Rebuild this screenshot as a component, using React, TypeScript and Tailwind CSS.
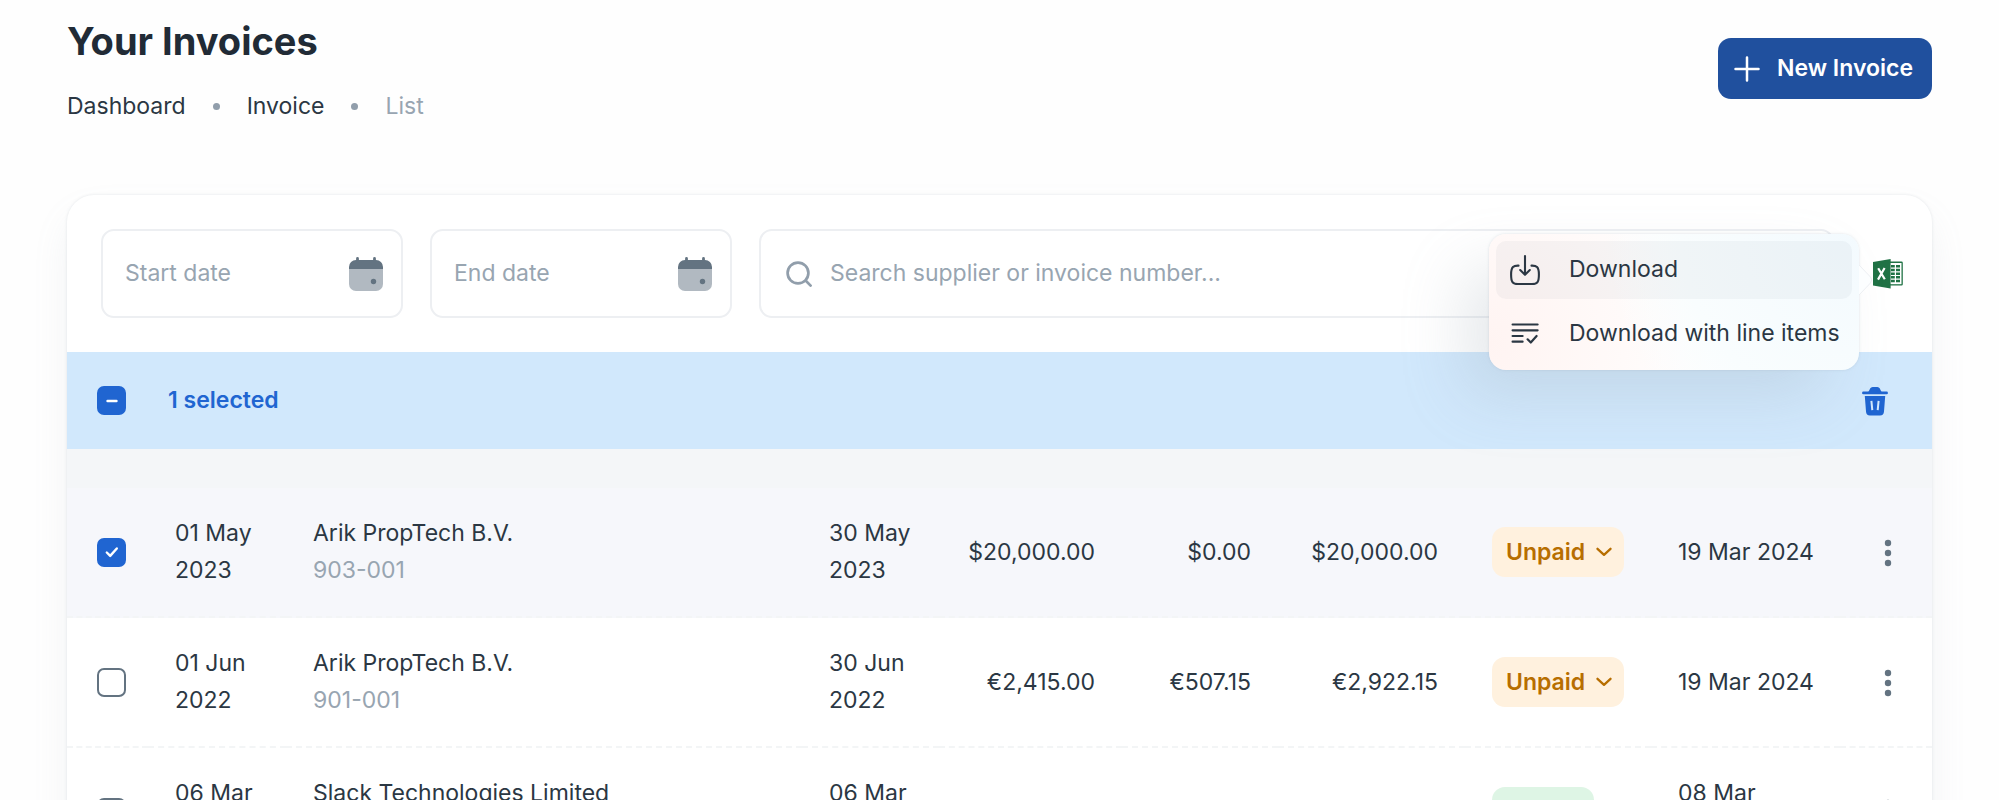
import React, { useState } from 'react';

interface Invoice {
  id: string;
  issued: [string, string];
  supplier: string;
  number: string;
  due: [string, string];
  amount: string;
  tax: string;
  total: string;
  status: 'Unpaid' | 'Paid';
  updated: string[];
}

const INVOICES: Invoice[] = [
  {
    id: '1',
    issued: ['01 May', '2023'],
    supplier: 'Arik PropTech B.V.',
    number: '903-001',
    due: ['30 May', '2023'],
    amount: '$20,000.00',
    tax: '$0.00',
    total: '$20,000.00',
    status: 'Unpaid',
    updated: ['19 Mar 2024'],
  },
  {
    id: '2',
    issued: ['01 Jun', '2022'],
    supplier: 'Arik PropTech B.V.',
    number: '901-001',
    due: ['30 Jun', '2022'],
    amount: '€2,415.00',
    tax: '€507.15',
    total: '€2,922.15',
    status: 'Unpaid',
    updated: ['19 Mar 2024'],
  },
  {
    id: '3',
    issued: ['06 Mar', '2024'],
    supplier: 'Slack Technologies Limited',
    number: '902-001',
    due: ['06 Mar', '2024'],
    amount: '€84.00',
    tax: '€0.00',
    total: '€84.00',
    status: 'Paid',
    updated: ['08 Mar', '2024'],
  },
];

const CalendarIcon = () => (
  <svg width="34" height="34" viewBox="0 0 34 34" aria-hidden="true">
    <path d="M0 12h34v15a7 7 0 0 1-7 7H7a7 7 0 0 1-7-7z" fill="#b1b9c1" />
    <path d="M8.5 0a1.4 1.4 0 0 1 1.4 1.4V3h14.2V1.4a1.4 1.4 0 0 1 2.8 0V3H27a7 7 0 0 1 7 7v2H0v-2a7 7 0 0 1 7-7h.1V1.4A1.4 1.4 0 0 1 8.5 0z" fill="#637381" />
    <circle cx="24.5" cy="24.5" r="2.7" fill="#637381" />
  </svg>
);

const SearchIcon = () => (
  <svg width="26" height="26" viewBox="0 0 26 26" fill="none" stroke="#919eab" strokeWidth="2.7" strokeLinecap="round" aria-hidden="true">
    <circle cx="12" cy="12" r="10.4" />
    <path d="m19.8 19.8 4.8 4.8" />
  </svg>
);

const DownloadIcon = () => (
  <svg width="32" height="32" viewBox="0 0 32 32" fill="none" stroke="#2b3743" strokeWidth="2.1" strokeLinecap="round" strokeLinejoin="round" aria-hidden="true">
    <path d="M9.5 11.6C4.6 11.4 2.1 12.8 2.1 20.5c0 7.5 1.4 9.5 6.9 9.5h14c5.5 0 6.9-2 6.9-9.5 0-7.7-2.5-9.1-7.4-8.9" />
    <path d="M16 2v18.500M11.200 16l4.800 4.800 4.800-4.800" />
  </svg>
);

const LineItemsIcon = () => (
  <svg width="32" height="32" viewBox="0 0 32 32" fill="none" stroke="#2b3743" strokeWidth="2.2" strokeLinecap="round" strokeLinejoin="round" aria-hidden="true">
    <path d="M3.600 6.500h25M3.600 12.300h25M3.600 18h10M3.600 23.700h10M18.600 21.300l3.200 3.200 5.800-6.500" />
  </svg>
);

const ExcelIcon = () => (
  <svg width="30" height="30" viewBox="0 0 30 30" aria-hidden="true">
    <path d="M17 2.500h11.500a1.300 1.300 0 0 1 1.300 1.300v21.400a1.300 1.300 0 0 1-1.300 1.300H17z" fill="#207245" />
    <path d="M17 4h11.500v21.200H17z" fill="#fff" />
    <path d="M18 6h3.800v2.500H18zM23 6h4v2.500h-4zM18 9.700h3.800v2.500H18zM23 9.700h4v2.500h-4zM18 13.400h3.800v2.500H18zM23 13.400h4v2.500h-4zM18 17.100h3.800v2.500H18zM23 17.100h4v2.500h-4zM18 20.800h3.800v2.500H18zM23 20.800h4v2.500h-4z" fill="#207245" />
    <path d="M0 3 17.600 0v29.500L0 26.500z" fill="#207245" />
    <path d="m5.200 9.300 6.600 11M11.600 9 5 20.600" stroke="#fff" strokeWidth="2.200" />
  </svg>
);

const TrashIcon = () => (
  <svg width="26" height="30" viewBox="0 0 26 30" aria-hidden="true">
    <path d="M1.400 5.600h4.800C7.600 5.200 7.600 1 10.800 1h4.400c3.200 0 3.200 4.200 4.600 4.600h4.800a1.350 1.350 0 0 1 0 2.700H1.400a1.350 1.350 0 0 1 0-2.700z" fill="#2065d1" />
    <path fillRule="evenodd" d="M2.800 10h20.400l-1.200 15.400c-.2 2.700-1.400 4-4 4H8c-2.600 0-3.800-1.300-4-4zm5.600 5 .9 9.300 2-.2-.9-9.300zm7.200-.2-.9 9.300 2 .2.900-9.300z" fill="#2065d1" />
  </svg>
);

const DateField: React.FC<{ id: string; label: string }> = ({ id, label }) => (
  <div className="flex h-[89px] w-[302px] shrink-0 items-center rounded-[13px] border-2 border-[#edeff2] pl-[22px] pr-[18px]">
    <input
      id={id}
      type="text"
      aria-label={label}
      placeholder={label}
      className="min-w-0 flex-1 bg-transparent text-[23px] text-[#212b36] outline-none placeholder:text-[#98a5b1]"
    />
    <button type="button" aria-label={`Choose ${label.toLowerCase()}`}>
      <CalendarIcon />
    </button>
  </div>
);

interface TickBoxProps {
  label: string;
  checked: boolean;
  partial?: boolean;
  onChange: () => void;
}

const TickBox: React.FC<TickBoxProps> = ({ label, checked, partial, onChange }) => (
  <label className="grid h-[29px] w-[29px] place-items-center">
    <input
      type="checkbox"
      aria-label={label}
      checked={checked}
      onChange={onChange}
      className="col-start-1 row-start-1 h-[29px] w-[29px] appearance-none rounded-[7px] border-2 border-[#637381] bg-white checked:border-[#2065d1] checked:bg-[#2065d1]"
    />
    {checked && (
      <svg width="14" height="14" viewBox="0 0 14 14" fill="none" stroke="#fff" strokeWidth="2.4" strokeLinecap="round" strokeLinejoin="round" className="pointer-events-none col-start-1 row-start-1" aria-hidden="true">
        <path d={partial ? 'M2.500 7h9' : 'm1.800 7.500 3.400 3.400 6.600-7.400'} />
      </svg>
    )}
  </label>
);

const StatusSelect: React.FC<{ status: Invoice['status']; id: string }> = ({ status, id }) => {
  const unpaid = status === 'Unpaid';
  return (
    <div className={`inline-grid h-[50px] items-center rounded-[13px] align-middle ${unpaid ? 'w-[132px] bg-[#fff1de] text-[#b76e00]' : 'w-[102px] bg-[#def5e5] text-[#118d57]'}`}>
      <select
        aria-label={`Status of invoice ${id}`}
        defaultValue={status}
        className="col-start-1 row-start-1 h-full w-full appearance-none bg-transparent pl-[14px] text-[23px] font-semibold outline-none"
      >
        <option>Unpaid</option>
        <option>Paid</option>
      </select>
      <svg width="16" height="10" viewBox="0 0 16 10" fill="none" stroke="currentColor" strokeWidth="2.300" strokeLinecap="round" strokeLinejoin="round" className="pointer-events-none col-start-1 row-start-1 mr-3 justify-self-end" aria-hidden="true">
        <path d="m1.500 1.800 6.500 6 6.500-6" />
      </svg>
    </div>
  );
};

const Lines: React.FC<{ lines: string[] }> = ({ lines }) => (
  <>
    {lines.map(line => (
      <span key={line} className="block">{line}</span>
    ))}
  </>
);

const ExportMenu = () => (
  <div
    role="menu"
    className="absolute -top-[25px] right-full z-10 mr-[14px] w-[370px] rounded-[17px] bg-[radial-gradient(circle_at_100%_0%,#f3fafe_0%,#f9fdfe_45%,transparent_65%),radial-gradient(circle_at_0%_80%,#fff4f2_0%,#fffaf9_35%,#ffffff_60%)] p-[7px] shadow-[0_0_3px_rgba(145,158,171,0.28),-30px_30px_64px_-6px_rgba(145,158,171,0.24)]"
  >
    <svg width="15" height="32" viewBox="0 0 15 32" className="absolute left-full top-[30px]" aria-hidden="true">
      <path d="M0 1 11.500 13q2.500 3 0 6L0 31z" fill="#fcfeff" />
      <path d="M0 1 11.500 13q2.500 3 0 6L0 31" fill="none" stroke="#eceff2" />
    </svg>
    <button type="button" role="menuitem" className="flex h-[58px] w-full items-center gap-7 whitespace-nowrap rounded-[10px] bg-[#919eab]/8 pl-[13px] text-[23px]">
      <DownloadIcon />
      Download
    </button>
    <button type="button" role="menuitem" className="mt-[6px] flex h-[58px] w-full items-center gap-7 whitespace-nowrap rounded-[10px] pl-[13px] text-[23px]">
      <LineItemsIcon />
      Download with line items
    </button>
  </div>
);

const App: React.FC = () => {
  const [selected, setSelected] = useState<string[]>(['1']);

  const toggle = (id: string) =>
    setSelected(prev => (prev.includes(id) ? prev.filter(x => x !== id) : [...prev, id]));

  const toggleAll = () =>
    setSelected(prev => (prev.length > 0 ? [] : INVOICES.map(i => i.id)));

  return (
    <div className="h-screen overflow-x-hidden overflow-y-auto bg-[#fefefe] px-[67px] pt-3 font-['Inter',sans-serif] text-[23px] text-[#2b3743] [scrollbar-width:none]">
      <header className="mb-[70px] flex items-center justify-between">
        <div>
          <h1 className="text-[38px] font-bold leading-[58px] text-[#212b36]">Your Invoices</h1>
          <nav aria-label="Breadcrumb" className="mt-[18px] flex items-center gap-[27px] leading-[37px]">
            <a href="#dashboard">Dashboard</a>
            <span className="h-[7px] w-[7px] rounded-full bg-[#919eab]" />
            <a href="#invoice">Invoice</a>
            <span className="h-[7px] w-[7px] rounded-full bg-[#919eab]" />
            <span className="text-[#98a5b1]">List</span>
          </nav>
        </div>
        <button type="button" className="flex h-[61px] items-center gap-[17px] rounded-[13px] bg-[#20509e] px-4 pr-[19px] font-semibold text-white">
          <svg width="26" height="26" viewBox="0 0 26 26" fill="none" stroke="currentColor" strokeWidth="2.500" strokeLinecap="round" aria-hidden="true">
            <path d="M13 1.500v23M1.500 13h23" />
          </svg>
          New Invoice
        </button>
      </header>

      <main className="rounded-[27px] bg-white shadow-[0_0_3px_rgba(145,158,171,0.24),0_20px_40px_-6px_rgba(145,158,171,0.14)]">
        <div className="flex items-center gap-[27px] py-[34px] pl-[34px] pr-[29px]">
          <DateField id="start" label="Start date" />
          <DateField id="end" label="End date" />
          <div className="flex h-[89px] flex-1 items-center gap-[18px] rounded-[13px] border-2 border-[#edeff2] px-[25px]">
            <SearchIcon />
            <input
              type="text"
              aria-label="Search invoices"
              placeholder="Search supplier or invoice number..."
              className="min-w-0 flex-1 bg-transparent text-[23px] outline-none placeholder:text-[#98a5b1]"
            />
          </div>
          <div className="relative ml-3 h-[30px]">
            <button type="button" aria-label="Export to Excel" className="block">
              <ExcelIcon />
            </button>
            <ExportMenu />
          </div>
        </div>

        <div className="flex h-[97px] items-center bg-[#d1e8fc] pl-[30px] pr-[44px] font-semibold text-[#2065d1]">
          <TickBox label="Select all invoices" checked={selected.length > 0} partial onChange={toggleAll} />
          <span className="ml-[42px] flex-1">{selected.length} selected</span>
          <button type="button" aria-label="Delete selected">
            <TrashIcon />
          </button>
        </div>

        <div className="h-[39px] bg-[#f4f6f8]" />

        <table className="w-full table-fixed border-separate border-spacing-0 leading-[37px]">
          <colgroup>
            <col className="w-[81px]" />
            <col className="w-[138px]" />
            <col />
            <col className="w-[137px]" />
            <col className="w-[183px]" />
            <col className="w-[156px]" />
            <col className="w-[187px]" />
            <col className="w-[186px]" />
            <col className="w-[189px]" />
            <col className="w-[92px]" />
          </colgroup>
          <tbody>
            {INVOICES.map(invoice => {
              const active = selected.includes(invoice.id);
              return (
                <tr
                  key={invoice.id}
                  className={`h-[130px] [&>td]:border-b-2 [&>td]:border-dashed [&>td]:border-[#f3f5f6] ${active ? 'bg-[#f6f7fb]' : 'bg-white'}`}
                >
                  <td className="pl-[30px]">
                    <TickBox label={`Select invoice ${invoice.number}`} checked={active} onChange={() => toggle(invoice.id)} />
                  </td>
                  <td className="pl-[27px]"><Lines lines={invoice.issued} /></td>
                  <td className="px-[27px]">
                    <span className="block">{invoice.supplier}</span>
                    <span className="block text-[#98a5b1]">{invoice.number}</span>
                  </td>
                  <td className="pl-[27px]"><Lines lines={invoice.due} /></td>
                  <td className="pr-[27px] text-right">{invoice.amount}</td>
                  <td className="pr-[27px] text-right">{invoice.tax}</td>
                  <td className="pr-[27px] text-right">{invoice.total}</td>
                  <td className="pl-[27px]">
                    <StatusSelect status={invoice.status} id={invoice.number} />
                  </td>
                  <td className="whitespace-nowrap pl-[27px]"><Lines lines={invoice.updated} /></td>
                  <td className="pl-1 text-center">
                    <button type="button" aria-label={`Actions for invoice ${invoice.number}`} className="align-middle">
                      <svg width="8" height="28" viewBox="0 0 8 28" fill="#637381" aria-hidden="true">
                        <circle cx="4" cy="4" r="3.200" />
                        <circle cx="4" cy="14" r="3.200" />
                        <circle cx="4" cy="24" r="3.200" />
                      </svg>
                    </button>
                  </td>
                </tr>
              );
            })}
          </tbody>
        </table>
      </main>
    </div>
  );
};

export default App;
